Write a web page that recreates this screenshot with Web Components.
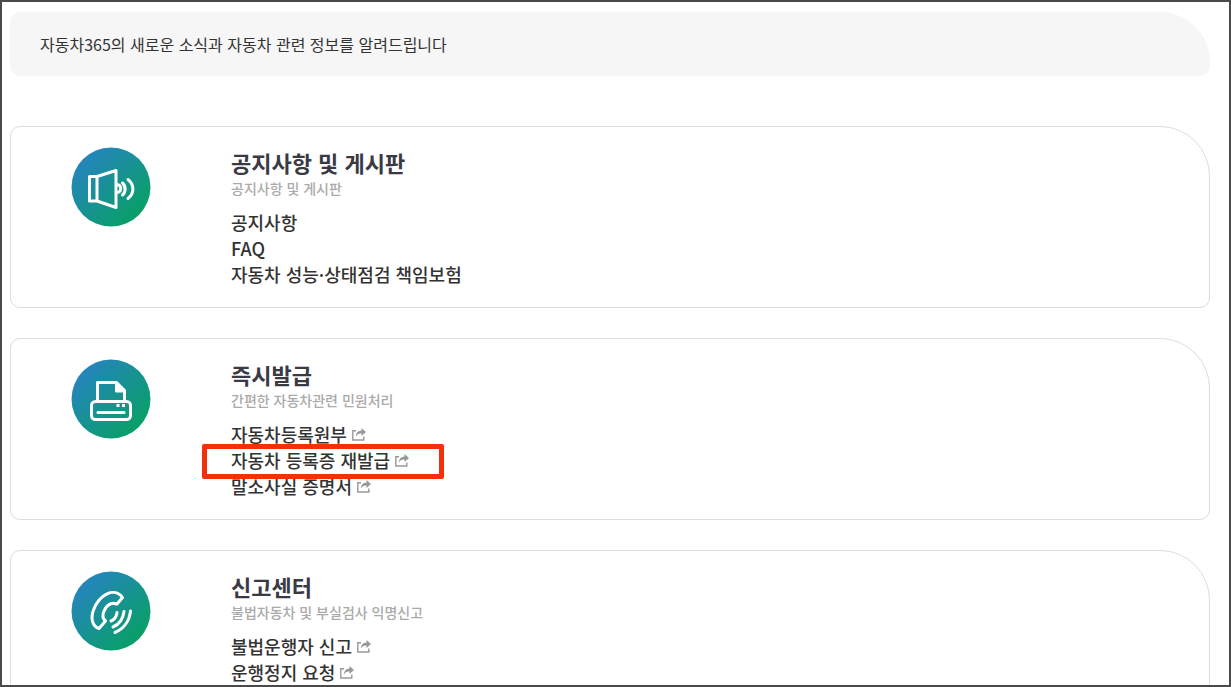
<!DOCTYPE html>
<html lang="ko">
<head>
<meta charset="utf-8">
<meta name="viewport" content="width=device-width, initial-scale=1">
<title>자동차365</title>
<style>
  * {
    box-sizing: border-box;
  }
  body {
    margin: 0;
    height: 100vh;
    overflow: hidden;
    border: 2px solid #4a4a4b;
    background: #fff;
    color: #333;
    font-family: "Noto Sans CJK KR", sans-serif;
  }
</style>
</head>
<body>
<site-map>
  <page-intro>자동차365의 새로운 소식과 자동차 관련 정보를 알려드립니다</page-intro>

  <menu-card heading="공지사항 및 게시판" summary="공지사항 및 게시판">
    <menu-icon slot="icon" name="speaker"></menu-icon>
    <menu-link>공지사항</menu-link>
    <menu-link>FAQ</menu-link>
    <menu-link>자동차 성능·상태점검 책임보험</menu-link>
  </menu-card>

  <menu-card heading="즉시발급" summary="간편한 자동차관련 민원처리">
    <menu-icon slot="icon" name="printer"></menu-icon>
    <menu-link external>자동차등록원부</menu-link>
    <menu-link external marked>자동차 등록증 재발급</menu-link>
    <menu-link external>말소사실 증명서</menu-link>
  </menu-card>

  <menu-card heading="신고센터" summary="불법자동차 및 부실검사 익명신고">
    <menu-icon slot="icon" name="phone"></menu-icon>
    <menu-link external>불법운행자 신고</menu-link>
    <menu-link external>운행정지 요청</menu-link>
  </menu-card>
</site-map>

<script>
// Shared base: stamps the markup into an open shadow root
class BaseElement extends HTMLElement {
  constructor() {
    super();
    this.attachShadow({ mode: "open" });
  }
  connectedCallback() {
    this.shadowRoot.innerHTML = this.render();
  }
}

class SiteMap extends BaseElement {
  render() {
    return `
      <style>
        :host {
          display: block;
          padding: 10px 19px 30px 8px;
        }
        main {
          display: flex;
          flex-direction: column;
          gap: 30px;
        }
      </style>
      <main><slot></slot></main>
    `;
  }
}

class PageIntro extends BaseElement {
  render() {
    return `
      <style>
        :host {
          display: block;
          margin-bottom: 20px;
          padding: 20px 30px;
          border-radius: 10px 50px 10px 10px;
          background: #f6f6f6;
        }
        p {
          margin: 0;
          font-size: 16px;
          line-height: 24px;
        }
      </style>
      <p><slot></slot></p>
    `;
  }
}

class MenuCard extends BaseElement {
  render() {
    return `
      <style>
        :host {
          display: flex;
          gap: 80px;
          padding: 20px 60px;
          border: 1px solid #ddd;
          border-radius: 10px 50px 10px 10px;
        }
        .body {
          flex: 1;
        }
        h2 {
          margin: 0;
          color: #3a3a44;
          font-size: 22px;
          font-weight: 700;
          line-height: 31px;
        }
        p {
          margin: 0 0 11px;
          color: #aaa;
          font-size: 14px;
          font-weight: 500;
          line-height: 20px;
        }
        nav {
          display: flex;
          flex-direction: column;
          align-items: flex-start;
        }
      </style>
      <slot name="icon"></slot>
      <div class="body">
        <h2>${this.getAttribute("heading")}</h2>
        <p>${this.getAttribute("summary")}</p>
        <nav aria-label="${this.getAttribute("heading")}"><slot></slot></nav>
      </div>
    `;
  }
}

class MenuLink extends BaseElement {
  render() {
    const arrow = `
      <svg viewBox="0 0 14 13" aria-hidden="true">
        <path d="M4 2.700H.8V12h11V8.500" fill="none" stroke="#999" stroke-width="1.400"/>
        <path d="M9.500 0L14 4 9.500 8V5.600C7 5.400 5 6.500 3.800 8.800 4 5 6 2.600 9.500 2.400z" fill="#999"/>
      </svg>`;
    return `
      <style>
        :host {
          display: block;
          position: relative;
        }
        a {
          display: flex;
          align-items: center;
          gap: 5px;
          color: #333;
          font-size: 18px;
          font-weight: 500;
          line-height: 26px;
          text-decoration: none;
        }
        svg {
          width: 14px;
          height: 13px;
        }
        /* red frame drawn over the neighbouring rows */
        :host([marked]) {
          z-index: 1;
        }
        :host([marked])::after {
          content: "";
          position: absolute;
          inset: -3px -35px -6px -29px;
          border: 5px solid #f42f0c;
          border-radius: 2px;
          pointer-events: none;
        }
      </style>
      <a href="#"><slot></slot>${this.hasAttribute("external") ? arrow : ""}</a>
    `;
  }
}

const icons = {
  speaker: `
    <path d="M18.500 29.500H26v24.500h-7.500zM26 29.500l19-6v37L26 54" />
    <path d="M46 37.500c5 0 5 8 0 8" />
    <path d="M51.500 36c3.500 3 3.500 9 0 12M57 32.500c6.500 5 6.500 14 0 19" />`,
  printer: `
    <rect x="20.500" y="42.500" width="39" height="18" rx="4" />
    <path d="M26.500 42V23.500h19l8 8V42" />
    <path d="M44.500 24v9h9z" fill="#fff" stroke-width="1" />
    <path d="M27 53.500h26" />
    <path d="M45.500 46.500h3M51 46.500h3" stroke-linecap="butt" />`,
  phone: `
    <path d="M51.500 26.500L46 33C40 31 36 34 33.500 39C31 44 32 48 34.500 50L28 57.500C21 55 19.500 47 22.500 39C25 32 29.500 26 36 22.800C42 20.200 48 21.500 51.500 26.500z" />
    <path d="M46 41.500c-.5 4-2.500 7-6 8.500M53 40.500c-1 8-5 13-11 15.500M59.500 40c-1 10-7 18-15.500 21.500" />`,
};

class MenuIcon extends BaseElement {
  render() {
    return `
      <style>
        :host {
          display: flex;
          flex: none;
          align-self: flex-start;
          width: 80px;
          height: 80px;
        }
        svg {
          width: 100%;
          height: 100%;
        }
      </style>
      <svg viewBox="0 0 80 80" aria-hidden="true">
        <defs>
          <linearGradient id="fill" x1="0.100" y1="0.150" x2="0.850" y2="0.900">
            <stop offset="0" stop-color="#2684bf" />
            <stop offset="1" stop-color="#08a064" />
          </linearGradient>
        </defs>
        <circle cx="40" cy="40" r="39.500" fill="url(#fill)" />
        <g fill="none" stroke="#fff" stroke-width="3" stroke-linecap="round" stroke-linejoin="round">
          ${icons[this.getAttribute("name")]}
        </g>
      </svg>
    `;
  }
}

customElements.define("site-map", SiteMap);
customElements.define("page-intro", PageIntro);
customElements.define("menu-card", MenuCard);
customElements.define("menu-link", MenuLink);
customElements.define("menu-icon", MenuIcon);
</script>
</body>
</html>
